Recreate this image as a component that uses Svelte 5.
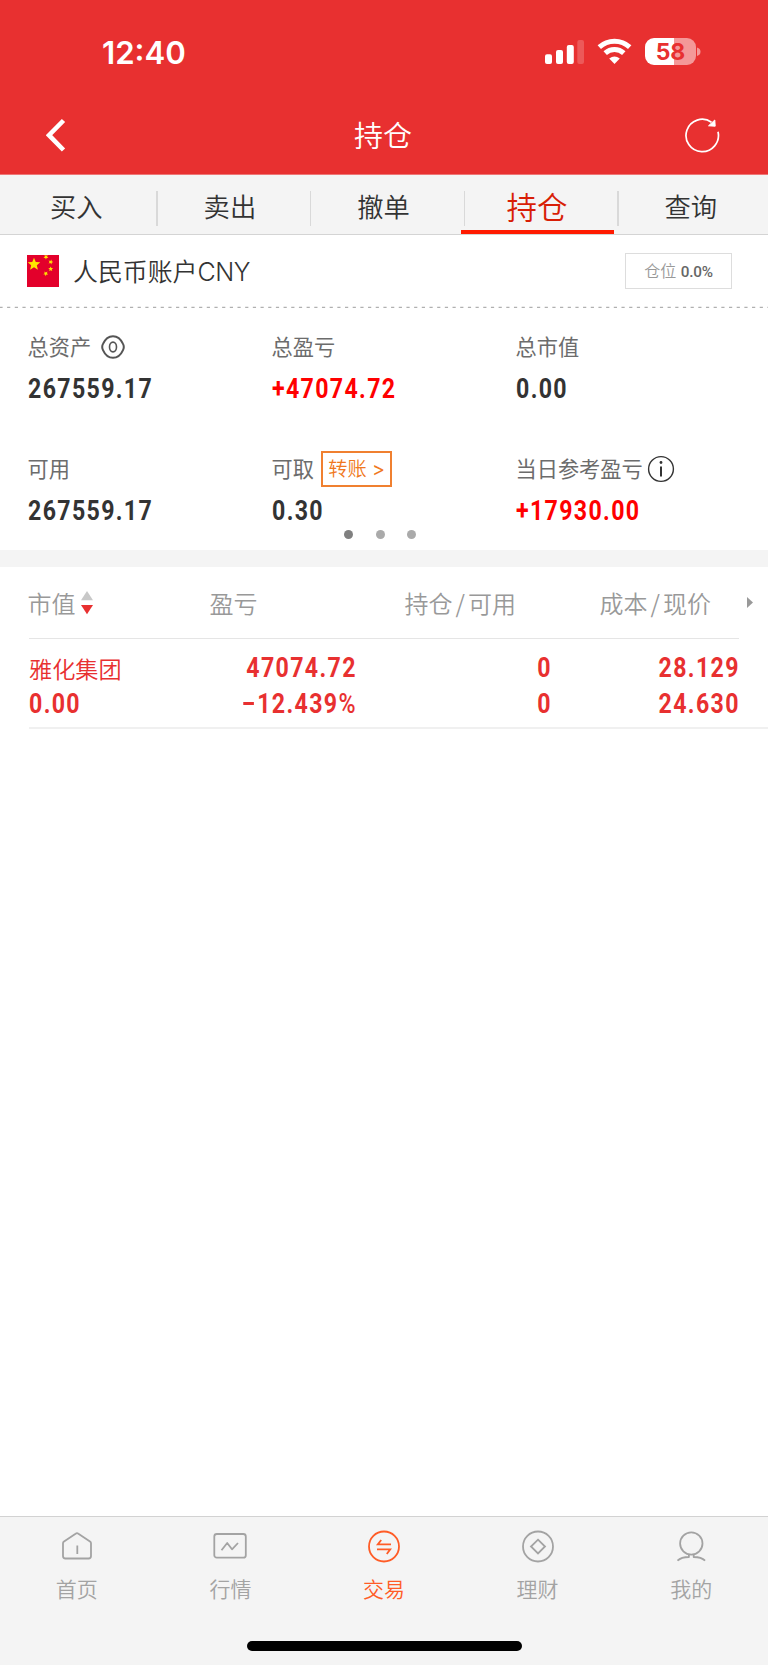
<script>
  const tabs = ['买入', '卖出', '撤单', '持仓', '查询'];
  const activeTab = '持仓';
  const nav = [
    { id: 'home', label: '首页' },
    { id: 'market', label: '行情' },
    { id: 'trade', label: '交易' },
    { id: 'wealth', label: '理财' },
    { id: 'me', label: '我的' },
  ];
  const star = (cx, cy, r, a = -90) =>
    Array.from({ length: 10 }, (_, i) => {
      const t = ((a + i * 36) * Math.PI) / 180;
      const q = i % 2 ? r * 0.45 : r;
      return `${(cx + q * Math.cos(t)).toFixed(2)},${(cy + q * Math.sin(t)).toFixed(2)}`;
    }).join(' ');
</script>

<div class="screen">
  <header>
    <div class="status">
      <span class="time">12:40</span>
      <svg class="sys" width="160" height="32" viewBox="0 0 160 32" fill="#fff">
        <rect x="5" y="18.3" width="7" height="9.7" rx="2" />
        <rect x="16" y="14" width="7" height="14" rx="2" />
        <rect x="26.8" y="9" width="7" height="19" rx="2" />
        <rect x="37.3" y="4" width="6.7" height="24" rx="2" opacity=".2" />
        <g fill="none" stroke="#fff" stroke-width="5">
          <path d="M59.3 11.2 A22.5 22.5 0 0 1 89.7 11.2" />
          <path d="M65.2 17.1 A13.7 13.7 0 0 1 83.8 17.1" />
        </g>
        <path d="M74.5 28 L69.2 22.6 Q74.5 18.6 79.8 22.6 Z" />
        <path d="M114 2 H134 V29 H114 A9 9 0 0 1 105 20 V11 A9 9 0 0 1 114 2Z" />
        <path opacity=".5" d="M134 2 H147 A9 9 0 0 1 156 11 V20 A9 9 0 0 1 147 29 H134Z" />
        <path opacity=".5" d="M157 11.5 Q160.5 12.5 160.5 15.8 Q160.5 19 157 20Z" />
        <text x="130.5" y="24.2" text-anchor="middle" class="pct">58</text>
      </svg>
    </div>
    <div class="titlebar">
      <svg width="20" height="36" viewBox="0 0 20 36" fill="none" stroke="#fff" stroke-width="4.6"><path d="M17.5 3.5 L3 18.2 L17.5 33" /></svg>
      <h1>持仓</h1>
      <svg width="36" height="36" viewBox="0 0 36 36" fill="none" stroke="#fff" stroke-width="1.7">
        <path d="M34 14.8 A16.2 16.2 0 1 1 27.5 5.2" />
        <path d="M24.5 8.8 L30.8 3 L31.2 9.2Z" fill="#fff" stroke-width="1" />
      </svg>
    </div>
  </header>

  <nav class="tabs">
    {#each tabs as tab}
      <div class="tab" class:active={tab === activeTab}><span>{tab}</span></div>
    {/each}
  </nav>

  <section class="account">
    <svg class="flag" width="32" height="32" viewBox="0 0 32 32">
      <rect width="32" height="32" fill="#e3002b" />
      <g fill="#ffe600">
        <polygon points={star(7, 9.3, 6.6)} />
        <polygon points={star(19, 2, 2.6, 20)} />
        <polygon points={star(23.7, 7, 2.6, 0)} />
        <polygon points={star(23.7, 14, 2.6)} />
        <polygon points={star(18.8, 18.6, 2.6, 20)} />
      </g>
    </svg>
    <span class="name">人民币账户<span class="code">CNY</span></span>
    <span class="position">仓位 <b>0.0%</b></span>
  </section>
  <svg width="768" height="2"><path d="M0 1.3 H768" stroke="#b0b0b0" stroke-width="1.2" stroke-dasharray="3.2 4.48" stroke-dashoffset="0.6" /></svg>

  <section class="summary">
    <div class="cell">
      <div class="label"><span>总资产</span>
        <svg class="eye" width="24" height="24" viewBox="0 0 24 24" fill="none" stroke="#555" stroke-width="2">
          <path d="M12 1.2 C16.5 1.2 19.8 4 22 8.9 Q23.6 12 22 15.1 C19.8 20 16.5 22.8 12 22.8 C7.5 22.8 4.2 20 2 15.1 Q.4 12 2 8.9 C4.2 4 7.5 1.2 12 1.2Z" />
          <ellipse cx="12" cy="12" rx="3.5" ry="4.9" stroke-width="1.6" />
        </svg>
      </div>
      <div class="num">267559.17</div>
    </div>
    <div class="cell"><div class="label"><span>总盈亏</span></div><div class="num up">+47074.72</div></div>
    <div class="cell"><div class="label"><span>总市值</span></div><div class="num">0.00</div></div>
    <div class="cell"><div class="label"><span>可用</span></div><div class="num">267559.17</div></div>
    <div class="cell"><div class="label"><span>可取</span><div class="transfer">转账 <b>&gt;</b></div></div><div class="num">0.30</div></div>
    <div class="cell">
      <div class="label"><span>当日参考盈亏</span>
        <svg class="info" width="28" height="28" viewBox="0 0 28 28" fill="none" stroke="#333">
          <circle cx="14" cy="14" r="12.4" stroke-width="1.4" />
          <path d="M14 11.5 V21.5" stroke-width="2" /><circle cx="14" cy="7.5" r="1.4" fill="#333" stroke="none" />
        </svg>
      </div>
      <div class="num up">+17930.00</div>
    </div>
  </section>
  <div class="pager"><i class="on"></i><i></i><i></i></div>

  <section class="holdings">
    <div class="head">
      <span class="sort">市值
        <svg width="12" height="24" viewBox="0 0 12 24"><path d="M6 0 L12 9.3 H0Z" fill="#c8c8c8" /><path d="M0 14 H12 L6 23.3Z" fill="#e83030" /></svg>
      </span>
      <span>盈亏</span>
      <span>持仓<em>/</em>可用</span>
      <span>成本<em>/</em>现价</span>
      <svg class="more" width="6" height="11" viewBox="0 0 6 11"><path d="M0 0 L6 5.5 L0 11Z" fill="#999" /></svg>
    </div>
    <div class="row">
      <div><p class="stock">雅化集团</p><p class="num">0.00</p></div>
      <div><p class="num">47074.72</p><p class="num"><i class="minus"></i>12.439<span class="percent">%</span></p></div>
      <div><p class="num">0</p><p class="num">0</p></div>
      <div><p class="num">28.129</p><p class="num">24.630</p></div>
    </div>
  </section>

  <footer>
    <div class="nav">
      {#each nav as item}
        <div class="item" class:current={item.id === 'trade'}>
          <svg width="36" height="36" viewBox="0 0 36 36" fill="none" stroke="currentColor" stroke-width="1.8" stroke-linejoin="round">
            {#if item.id === 'home'}
              <path d="M4 14.3 Q4 13.3 5 12.6 L16.6 4.7 Q18 3.7 19.4 4.7 L31 12.6 Q32 13.3 32 14.3 V27 Q32 29.5 29.5 29.5 H6.5 Q4 29.5 4 27Z" />
              <path d="M18.3 16.5 V25" />
            {:else if item.id === 'market'}
              <rect x="2.3" y="5" width="31.5" height="23.7" rx="2.5" /><path d="M9.5 21.3 L15.2 14 L20 20.3 L26 14" />
            {:else if item.id === 'trade'}
              <circle cx="18" cy="17.5" r="15" />
              <path d="M15.2 11 L11.8 15.4 H25 M11 20.4 H24.2 L20.8 25" stroke-linejoin="miter" />
            {:else if item.id === 'wealth'}
              <circle cx="18" cy="17.5" r="15" /><path d="M18 10.7 L25 17.5 L18 24.5 L11 17.5Z" stroke-linejoin="miter" />
            {:else}
              <circle cx="18.3" cy="14.5" r="11.2" />
              <path d="M15.9 25.5 V28 Q8.3 28 4.5 31.7 M20.7 25.5 V28 Q28.3 28 32.1 31.7" />
            {/if}
          </svg>
          <span>{item.label}</span>
        </div>
      {/each}
    </div>
    <div class="indicator"></div>
  </footer>
</div>

<style>
  :global(body) { background: #fff; }
  .screen { width: 768px; height: 1665px; display: flex; flex-direction: column; overflow: hidden; background: #fff; color: #333; font-family: "Noto Sans CJK SC", sans-serif; font-weight: 350; }
  svg { display: block; flex: none; }
  header { height: 175px; background: #e83030; color: #fff; border-bottom: 1px solid #ee7676; box-sizing: border-box; flex: none; }
  .status { height: 100px; display: flex; justify-content: space-between; padding: 0 68px 0 102px; }
  .time { font: 600 31.2px/107px Inter, sans-serif; }
  .sys { margin-top: 36.4px; overflow: visible; }
  .pct { font: 700 23px Inter, sans-serif; fill: #e83030; }
  .titlebar { display: flex; align-items: center; justify-content: space-between; height: 70px; padding: 0 48px 0 46px; }
  h1 { margin: 0 0 0 16px; font-size: 29px; line-height: 68px; height: 70px; font-weight: 350; }

  .tabs { height: 60px; display: flex; background: #f4f4f4; border-bottom: 1px solid #d4d4d4; box-sizing: border-box; flex: none; }
  .tab { flex: 1; box-sizing: border-box; position: relative; text-align: center; font-size: 26.3px; line-height: 62px; }
  .tab + .tab::before { content: ""; position: absolute; left: 2.8px; top: 16px; width: 1.5px; height: 35px; background: #d9d9d9; }
  .tab span { margin-right: 1px; }
  .active { color: #d81e06; font-size: 30.5px; }
  .active::after { content: ""; position: absolute; left: 0; right: 0; bottom: 0; height: 4px; background: #ff1a00; }

  .account { height: 71px; display: flex; align-items: center; padding: 0 36px 0 27px; flex: none; }
  .name { margin-left: 14px; font-size: 24.9px; line-height: 36px; flex: 1; padding-bottom: 2px; }
  .code { font: 300 25px Inter, sans-serif; letter-spacing: -.4px; }
  .position { border: 1px solid #ddd; width: 105px; height: 34px; font-size: 16px; line-height: 33px; text-align: center; color: #999; white-space: nowrap; }
  .position b { font: 500 15.3px "Roboto", sans-serif; letter-spacing: -.2px; margin-left: 1px; color: #666; }

  .summary { display: grid; grid-template-columns: 244px 244px 1fr; grid-template-rows: 122px 84px; padding: 19px 0 0 27.5px; flex: none; }
  .label { display: flex; align-items: center; height: 40px; font-size: 21.2px; color: #6c6c6c; font-weight: 400; white-space: nowrap; }
  .label span { line-height: 30px; padding-bottom: 3px; }
  .eye { margin-left: 9.5px; }
  .info { margin-left: 4.5px; }
  .transfer { margin-left: 7.2px; border: 2px solid #f08030; height: 32px; width: 67px; text-align: center; font-size: 19.2px; line-height: 31px; color: #f07820; font-weight: 350; }
  .transfer b { font: 400 19.5px Inter, sans-serif; margin-left: 1px; }
  .num { font: 700 28.3px/44px Roboto, sans-serif; letter-spacing: 1.65px; transform: scaleX(.818); transform-origin: left; white-space: nowrap; }
  .up { color: #f00; }
  .pager { display: flex; gap: 22.5px; justify-content: center; padding: .5px 8px 0 0; margin-top: -4px; height: 21px; box-sizing: border-box; flex: none; }
  .pager i { width: 9px; height: 9px; border-radius: 50%; background: #aaa; }
  .pager .on { background: #808080; }

  .holdings { border-top: 17px solid #f4f4f4; flex: 1; }
  .head { display: grid; grid-template-columns: 182px 195px 195px 147.5px 6px; height: 71px; align-items: center; margin-left: 27.5px; font-size: 24px; line-height: 70px; color: #999; position: relative; }
  .head::after { content: ""; position: absolute; left: 1.5px; right: 29px; bottom: -1px; height: 1px; background: #e5e5e5; }
  .head em { font-style: normal; margin: 0 3px; }
  .sort { display: flex; align-items: center; }
  .sort svg { margin-left: 5px; }
  .row { display: grid; grid-template-columns: 182px 144px 195px 188px; height: 91px; box-sizing: border-box; margin-left: 29px; padding-top: 11px; border-bottom: 2px solid #f0f0f0; color: #e83030; }
  .row p { margin: 0; height: 36px; line-height: 38px; }
  .row div + div { text-align: right; }
  .row div + div .num { transform-origin: right; margin-right: -1.8px; }
  .row p.num { line-height: 38px; }
  .stock { font-size: 23.2px; }
  .minus { display: inline-block; width: 13px; height: 2.7px; margin: 0 4px 8.5px 0; background: currentColor; }
  .percent { font-weight: 500; }

  footer { height: 149px; background: #f4f4f4; border-top: 1px solid #d2d2d2; box-sizing: border-box; flex: none; }
  .nav { display: flex; height: 124px; }
  .item { flex: 1; display: flex; flex-direction: column; align-items: center; color: #a3a3a3; font-size: 21px; padding-top: 12px; }
  .item span { line-height: 30px; margin-top: 8px; }
  .current { color: #ff5c26; }
  .indicator { width: 275px; height: 10px; border-radius: 5px; background: #000; margin: 0 auto; }
</style>
